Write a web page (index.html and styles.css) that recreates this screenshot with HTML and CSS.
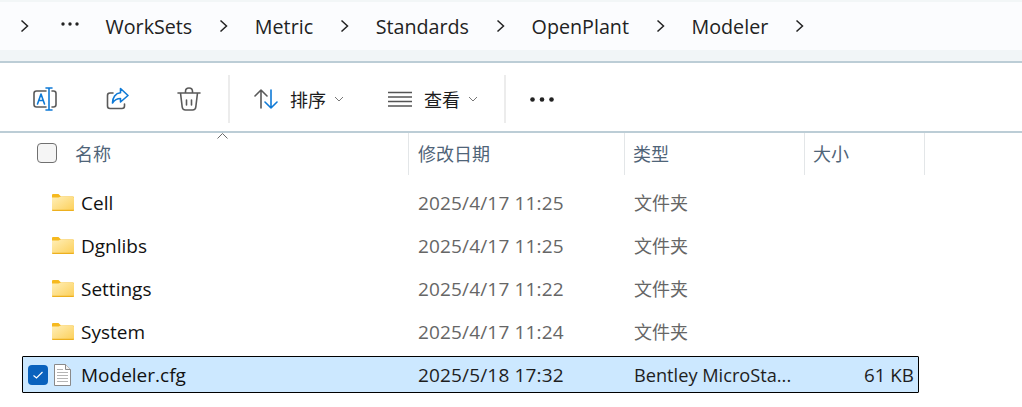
FILE: index.html
```html
<!DOCTYPE html>
<html lang="zh">
<head>
<meta charset="utf-8">
<title>Modeler</title>
<link rel="stylesheet" href="styles.css">
</head>
<body>
<div class="top-strip"></div>
<nav class="crumbs">
  <svg class="chev" viewBox="0 0 9 14"><path d="M1.500 1.500 7.500 7 1.500 12.500"/></svg>
  <svg class="crumb-dots" viewBox="0 0 18 4"><circle cx="2" cy="2" r="1.700"/><circle cx="9" cy="2" r="1.700"/><circle cx="16" cy="2" r="1.700"/></svg>
  <span>WorkSets</span>
  <svg class="chev" viewBox="0 0 9 14"><path d="M1.500 1.500 7.500 7 1.500 12.500"/></svg>
  <span>Metric</span>
  <svg class="chev" viewBox="0 0 9 14"><path d="M1.500 1.500 7.500 7 1.500 12.500"/></svg>
  <span>Standards</span>
  <svg class="chev" viewBox="0 0 9 14"><path d="M1.500 1.500 7.500 7 1.500 12.500"/></svg>
  <span>OpenPlant</span>
  <svg class="chev" viewBox="0 0 9 14"><path d="M1.500 1.500 7.500 7 1.500 12.500"/></svg>
  <span>Modeler</span>
  <svg class="chev" viewBox="0 0 9 14"><path d="M1.500 1.500 7.500 7 1.500 12.500"/></svg>
</nav>
<div class="crumbs-foot"></div>
<div class="toolbar">
  <svg class="tool-icon rename" viewBox="0 0 24 24">
    <path class="grey" d="M13 4H3.500Q1 4 1 6.500V17.500Q1 20 3.500 20H13"/>
    <path class="grey" d="M19 4H20.500Q23 4 23 6.500V17.500Q23 20 20.500 20H19"/>
    <path class="blue" d="M16 1V23M13 1H19M13 23H19"/>
    <path class="blue" d="M4.500 17 8 7 11.500 17M5.700 13.500H10.300"/>
  </svg>
  <svg class="tool-icon share" viewBox="0 0 24 24">
    <path class="grey" d="M8 6H5Q2.500 6 2.500 8.500V19Q2.500 21.500 5 21.500H17Q19.500 21.500 19.500 19V17"/>
    <path class="blue" d="M15.500 1.500 23 8.500 15.500 15V11.500C12 11.500 9.500 13 7.500 16 7.500 10.500 10.500 6.200 15.500 5.800Z"/>
  </svg>
  <svg class="tool-icon trash" viewBox="0 0 24 24">
    <path class="grey" d="M1 6H23M8.500 6V4.500Q8.500 1 12 1 15.500 1 15.500 4.500V6M3.500 6 5.200 20Q5.500 23 8.500 23H15.500Q18.500 23 18.800 20L20.500 6M9.500 13V18M14.500 13V18"/>
  </svg>
  <span class="tool-sep first"></span>
  <svg class="tool-icon sort" viewBox="0 0 24 24">
    <path class="grey" d="M7 21V3M1 9 7 3 13 9"/>
    <path class="blue" d="M17 3V21M11 15 17 21 23 15"/>
  </svg>
  <span class="tool-label">排序</span>
  <svg class="mini-chev" viewBox="0 0 10 6"><path d="M1 1 5 5 9 1"/></svg>
  <svg class="tool-icon list" viewBox="0 0 24 16">
    <path class="rule" d="M0 1.500H24M0 6H24M0 10.500H24M0 15H24"/>
  </svg>
  <span class="tool-label">查看</span>
  <svg class="mini-chev" viewBox="0 0 10 6"><path d="M1 1 5 5 9 1"/></svg>
  <span class="tool-sep second"></span>
  <svg class="more" viewBox="0 0 24 5"><circle cx="2.500" cy="2.500" r="2.300"/><circle cx="12" cy="2.500" r="2.300"/><circle cx="21.500" cy="2.500" r="2.300"/></svg>
</div>

<div class="header">
  <div class="head-cell name-head">
    <span class="box"></span>
    <span>名称</span>
    <svg class="sort-caret" viewBox="0 0 11 6"><path d="M.5 5.500 5.500 .5 10.500 5.500"/></svg>
  </div>
  <div class="head-cell">修改日期</div>
  <div class="head-cell">类型</div>
  <div class="head-cell">大小</div>
</div>

<div class="row">
  <div class="name"><svg class="folder" viewBox="0 0 22 17"><use href="#folder-art"/></svg><span>Cell</span></div>
  <div class="date muted">2025/4/17 11:25</div><div class="kind muted">文件夹</div><div></div>
</div>
<div class="row">
  <div class="name"><svg class="folder" viewBox="0 0 22 17"><use href="#folder-art"/></svg><span>Dgnlibs</span></div>
  <div class="date muted">2025/4/17 11:25</div><div class="kind muted">文件夹</div><div></div>
</div>
<div class="row">
  <div class="name"><svg class="folder" viewBox="0 0 22 17"><use href="#folder-art"/></svg><span>Settings</span></div>
  <div class="date muted">2025/4/17 11:22</div><div class="kind muted">文件夹</div><div></div>
</div>
<div class="row">
  <div class="name"><svg class="folder" viewBox="0 0 22 17"><use href="#folder-art"/></svg><span>System</span></div>
  <div class="date muted">2025/4/17 11:24</div><div class="kind muted">文件夹</div><div></div>
</div>
<div class="row selected">
  <div class="name">
    <span class="check"><svg viewBox="0 0 12 10"><path d="M1.500 5.500 4.500 8 10.500 2"/></svg></span>
    <svg class="doc" viewBox="0 0 17 22">
      <path class="doc-sheet" d="M.5 .5H11.500L16.500 5.500V21.500H.5Z"/>
      <path class="doc-fold" d="M11.500 .5V5.500H16.500"/>
      <path class="doc-lines" d="M3 5.500H9M3 8.500H14M3 11.500H14M3 14.500H14M3 17.500H14"/>
    </svg>
    <span>Modeler.cfg</span>
  </div>
  <div class="date dark">2025/5/18 17:32</div>
  <div class="type dark">Bentley MicroSta...</div>
  <div class="dark size">61 KB</div>
</div>

<svg class="defs" aria-hidden="true">
  <defs>
    <linearGradient id="folder-fill" x1="0" y1="0" x2="1" y2="1">
      <stop offset="0" stop-color="#ffefb8"/>
      <stop offset="1" stop-color="#fccf58"/>
    </linearGradient>
    <g id="folder-art">
      <path d="M0 1Q0 0 1 0H6.500L9 2.500H21Q22 2.500 22 3.500V6H0Z" fill="#f6b91e"/>
      <path d="M0 3.500H6.500L9 2.500 21 3Q22 3 22 4V16Q22 17 21 17H1Q0 17 0 16Z" fill="url(#folder-fill)"/>
      <path d="M0 15.800H22V16Q22 17 21 17H1Q0 17 0 16Z" fill="#edb01f"/>
    </g>
  </defs>
</svg>
</body>
</html>
```
FILE: styles.css
```css
* { box-sizing: border-box; }
html, body { margin: 0; padding: 0; }
body {
  width: 1022px;
  height: 407px;
  overflow: hidden;
  background: #fff;
  font-family: "Open Sans", "Noto Sans CJK SC", sans-serif;
  color: #1a1a1a;
}
.top-strip { height: 2px; background: #f2f6f7; }
.crumbs {
  height: 48px;
  background: #fbfcfe;
  display: flex;
  align-items: center;
  gap: 26.8px;
  padding-left: 20px;
  font-size: 19.7px;
  color: #222;
}
.chev { width: 9px; height: 14px; flex: none; }
.chev path { fill: none; stroke: #222; stroke-width: 1.5; }
.crumb-dots { width: 18px; height: 4px; margin: 0 0 4px 5px; fill: #222; flex: none; }
.crumbs-foot { height: 11px; background: #f1f5f7; }
.toolbar {
  height: 72px;
  border-top: 2px solid #bccdd6;
  border-bottom: 2px solid #bccdd6;
  display: flex;
  align-items: center;
  padding: 4px 0 0 33px;
  background: #fff;
}
.tool-icon { width: 24px; height: 24px; flex: none; }
.tool-icon path { fill: none; stroke-width: 1.6; stroke-linecap: round; stroke-linejoin: round; }
.grey { stroke: #5a5a5a; }
.blue { stroke: #0f7ad6; }
.tool-icon .rule { stroke: #555; stroke-linecap: butt; stroke-width: 1.4; }
.share { margin-left: 48px; }
.trash { margin-left: 48px; }
.tool-sep { width: 2px; height: 48px; background: #ececec; flex: none; }
.tool-sep.first { margin-left: 27px; }
.tool-sep.second { margin-left: 26px; }
.sort { margin-left: 24px; }
.tool-label { margin-left: 12px; font-size: 18px; color: #1c1c1c; flex: none; }
.mini-chev { width: 10px; height: 6px; margin-left: 8px; flex: none; }
.mini-chev path { fill: none; stroke: #777; stroke-width: 1; }
.list { height: 16px; margin-left: 44px; }
.more { width: 24px; height: 5px; margin-left: 24px; fill: #222; flex: none; }

.header {
  display: grid;
  grid-template-columns: 408px 217px 180px 120px;
  height: 42px;
  margin-bottom: 6px;
  font-size: 18px;
  color: #4f6478;
}
.head-cell {
  display: flex;
  align-items: center;
  padding: 0 0 2px 8px;
  border-right: 1px solid #e3e6e8;
}
.head-cell:first-child { border-right: 0; }
.head-cell:nth-child(2) { border-left: 1px solid #e3e6e8; padding-left: 9px; }
.name-head { padding-left: 37px; position: relative; gap: 18px; }
.box {
  width: 20px;
  height: 20px;
  border: 1px solid #707070;
  border-radius: 4px;
  background: #f5f5f5;
  flex: none;
}
.sort-caret {
  position: absolute;
  left: 217px;
  top: 0;
  width: 11px;
  height: 6px;
}
.sort-caret path { fill: none; stroke: #6b6b6b; stroke-width: 1; }

.row {
  display: grid;
  grid-template-columns: 408px 216px 180px 120px;
  height: 43px;
  align-items: center;
  font-size: 18px;
  color: #111;
}
.row > div { padding-left: 10px; white-space: nowrap; }
.row > .name {
  padding-left: 52px;
  display: flex;
  align-items: center;
  gap: 7px;
  font-size: 19px;
}
.row > .date { font-size: 19px; letter-spacing: .16px; }
.row > .type { font-size: 18.2px; }
.row > .kind { padding-bottom: 2px; }
.folder { width: 22px; height: 17px; flex: none; }
.muted { color: #666; }
.dark { color: #1e1e1e; }

.selected {
  width: 897px;
  height: 37px;
  margin: 3px 0 0 22px;
  background: #cce8ff;
  border: 1px solid #000;
  border-radius: 1px;
  grid-template-columns: 385px 216px 180px 114px;
}
.row.selected > .name { padding-left: 5px; gap: 0; }
.check {
  width: 20px;
  height: 20px;
  border-radius: 4px;
  background: #0a62bd;
  display: flex;
  align-items: center;
  justify-content: center;
  flex: none;
}
.check svg { width: 12px; height: 10px; }
.check path { fill: none; stroke: #fff; stroke-width: 1.2; }
.doc { width: 17px; height: 22px; margin: 0 10px 0 6px; flex: none; }
.doc-sheet { fill: #fff; stroke: #8a8a8a; }
.doc-fold { fill: #f0f0f0; stroke: #8a8a8a; }
.doc-lines { fill: none; stroke: #b5b5b5; }
.row > .size { padding: 0 4px 0 0; text-align: right; font-size: 18.8px; }
.defs { position: absolute; width: 0; height: 0; }
```
